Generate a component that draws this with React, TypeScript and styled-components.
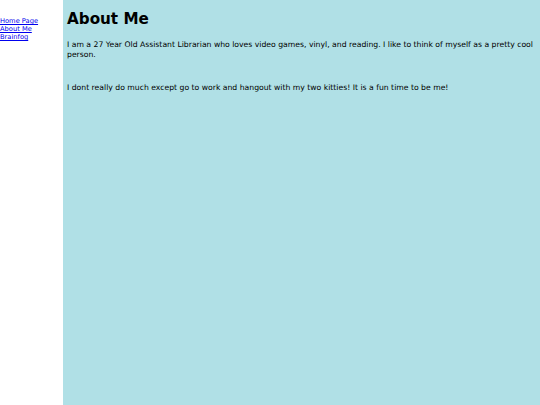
import React from "react";
import styled, { createGlobalStyle } from "styled-components";

const GlobalStyle = createGlobalStyle`
  html, body {
    margin: 0;
    padding: 0;
    background: #fff;
    font-family: "DejaVu Sans", Verdana, sans-serif;
  }
`;

const App: React.FC = (): JSX.Element => {
  return (
    <Page>
      <GlobalStyle />
      <Sidebar>
        <NavLink href="#">Home Page</NavLink>
        <NavLink href="#">About Me</NavLink>
        <NavLink href="#">Brainfog</NavLink>
      </Sidebar>
      <Main>
        <Title>About Me</Title>
        <Text>
          I am a 27 Year Old Assistant Librarian who loves video games, vinyl,
          and reading. I like to think of myself as a pretty cool person.
        </Text>
        <Text $gap>
          I dont really do much except go to work and hangout with my two
          kitties! It is a fun time to be me!
        </Text>
      </Main>
    </Page>
  );
};

const Page = styled.div`
  display: flex;
  min-height: 405px;
`;

const Sidebar = styled.nav`
  width: 63px;
  flex-shrink: 0;
  display: flex;
  flex-direction: column;
  padding-top: 17px;
`;

const NavLink = styled.a`
  font-size: 6.7px;
  line-height: 8px;
  color: #0000ee;
  text-decoration: underline;
`;

const Main = styled.main`
  flex: 1;
  background: #b0e0e6;
  padding: 8px 4px;
`;

const Title = styled.h1`
  margin: 0 0 10px;
  font-size: 15.2px;
  line-height: 22px;
  font-weight: bold;
  color: #000;
`;

const Text = styled.p<{ $gap?: boolean }>`
  margin: ${(p) => (p.$gap ? "24px" : "0")} 0 0;
  font-size: 7.7px;
  line-height: 9.5px;
  color: #000;
`;

export default App;
